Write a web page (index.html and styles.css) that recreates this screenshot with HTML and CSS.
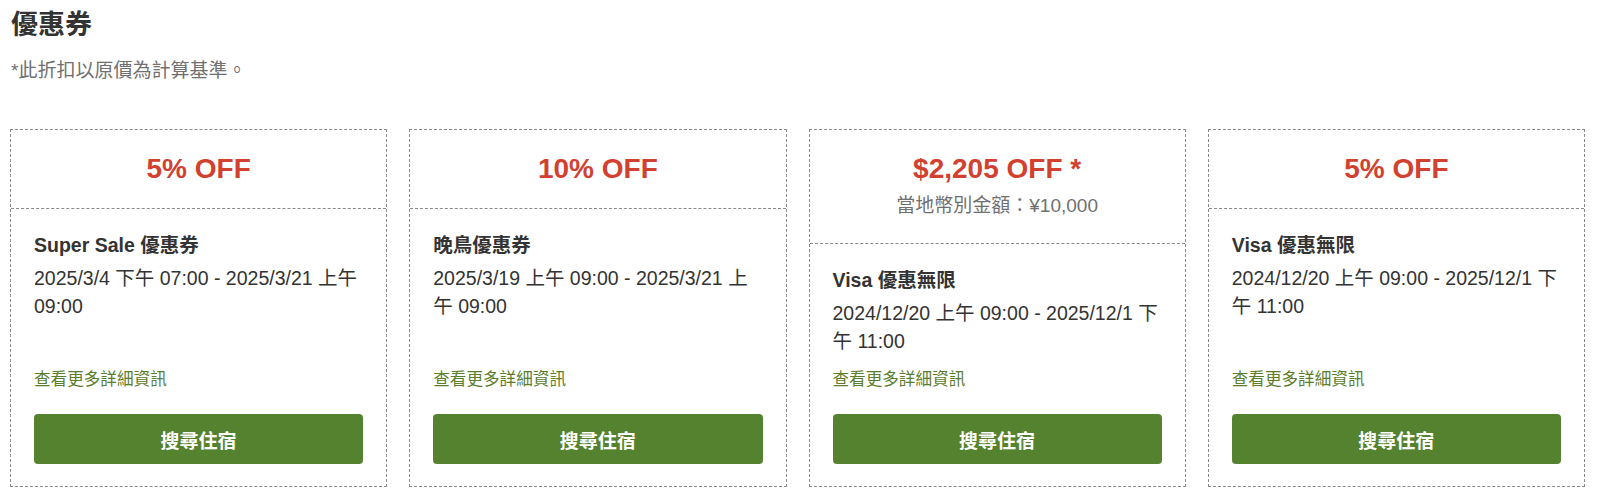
FILE: index.html
```html
<!DOCTYPE html>
<html lang="zh-Hant">
<head>
<meta charset="utf-8">
<title>優惠券</title>
<link rel="stylesheet" href="styles.css">
</head>
<body>
<div class="page">
  <h1 class="title">優惠券</h1>
  <p class="note">*此折扣以原價為計算基準。</p>
  <div class="cards">
    <div class="card">
      <div class="card-head">
        <div class="discount">5% OFF</div>
      </div>
      <div class="card-body">
        <div class="name">Super Sale 優惠券</div>
        <div class="period">2025/3/4 下午 07:00 - 2025/3/21 上午 09:00</div>
        <a class="more" href="#">查看更多詳細資訊</a>
        <button class="btn" type="button">搜尋住宿</button>
      </div>
    </div>
    <div class="card">
      <div class="card-head">
        <div class="discount">10% OFF</div>
      </div>
      <div class="card-body">
        <div class="name">晚鳥優惠券</div>
        <div class="period">2025/3/19 上午 09:00 - 2025/3/21 上午 09:00</div>
        <a class="more" href="#">查看更多詳細資訊</a>
        <button class="btn" type="button">搜尋住宿</button>
      </div>
    </div>
    <div class="card">
      <div class="card-head">
        <div class="discount">$2,205 OFF *</div>
        <div class="local">當地幣別金額：¥10,000</div>
      </div>
      <div class="card-body">
        <div class="name">Visa 優惠無限</div>
        <div class="period">2024/12/20 上午 09:00 - 2025/12/1 下午 11:00</div>
        <a class="more" href="#">查看更多詳細資訊</a>
        <button class="btn" type="button">搜尋住宿</button>
      </div>
    </div>
    <div class="card">
      <div class="card-head">
        <div class="discount">5% OFF</div>
      </div>
      <div class="card-body">
        <div class="name">Visa 優惠無限</div>
        <div class="period">2024/12/20 上午 09:00 - 2025/12/1 下午 11:00</div>
        <a class="more" href="#">查看更多詳細資訊</a>
        <button class="btn" type="button">搜尋住宿</button>
      </div>
    </div>
  </div>
</div>
</body>
</html>
```
FILE: styles.css
```css
html, body {
  margin: 0;
  padding: 0;
  background: #ffffff;
}

body {
  font-family: "Liberation Sans", "Noto Sans CJK TC", Arial, sans-serif;
  color: #333333;
}

.page {
  padding: 0 13px 0 10px;
}

.title {
  margin: 8px 0 0 1px;
  font-size: 27px;
  line-height: 34px;
  font-weight: 700;
  color: #333333;
}

.note {
  margin: 15px 0 0 1px;
  font-size: 19px;
  line-height: 28px;
  color: #707070;
}

.cards {
  margin-top: 44px;
  display: grid;
  grid-template-columns: repeat(4, 1fr);
  column-gap: 22px;
}

.card {
  border: 1px dashed #8a8a8a;
  display: flex;
  flex-direction: column;
}

.card-head {
  padding: 22px 24px;
  border-bottom: 1px dashed #8a8a8a;
  text-align: center;
}

.discount {
  font-size: 28px;
  line-height: 34px;
  font-weight: 700;
  color: #d2402f;
}

.local {
  margin-top: 4px;
  font-size: 19px;
  line-height: 31px;
  color: #707070;
}

.card-body {
  flex: 1;
  display: flex;
  flex-direction: column;
  padding: 22px 23px 22px 23px;
}

.name {
  font-size: 19.5px;
  line-height: 28px;
  font-weight: 700;
  color: #333333;
}

.period {
  margin-top: 5px;
  font-size: 19.5px;
  line-height: 28px;
  color: #333333;
}

.more {
  margin-top: auto;
  padding-top: 13px;
  font-size: 16.6px;
  line-height: 24px;
  color: #5b7d2c;
  text-decoration: none;
  align-self: flex-start;
}

.btn {
  margin-top: 22px;
  height: 50px;
  width: 100%;
  border: none;
  border-radius: 4px;
  background: #55822e;
  color: #ffffff;
  font-family: "Liberation Sans", "Noto Sans CJK TC", Arial, sans-serif;
  font-size: 19px;
  font-weight: 700;
  cursor: pointer;
}
```
